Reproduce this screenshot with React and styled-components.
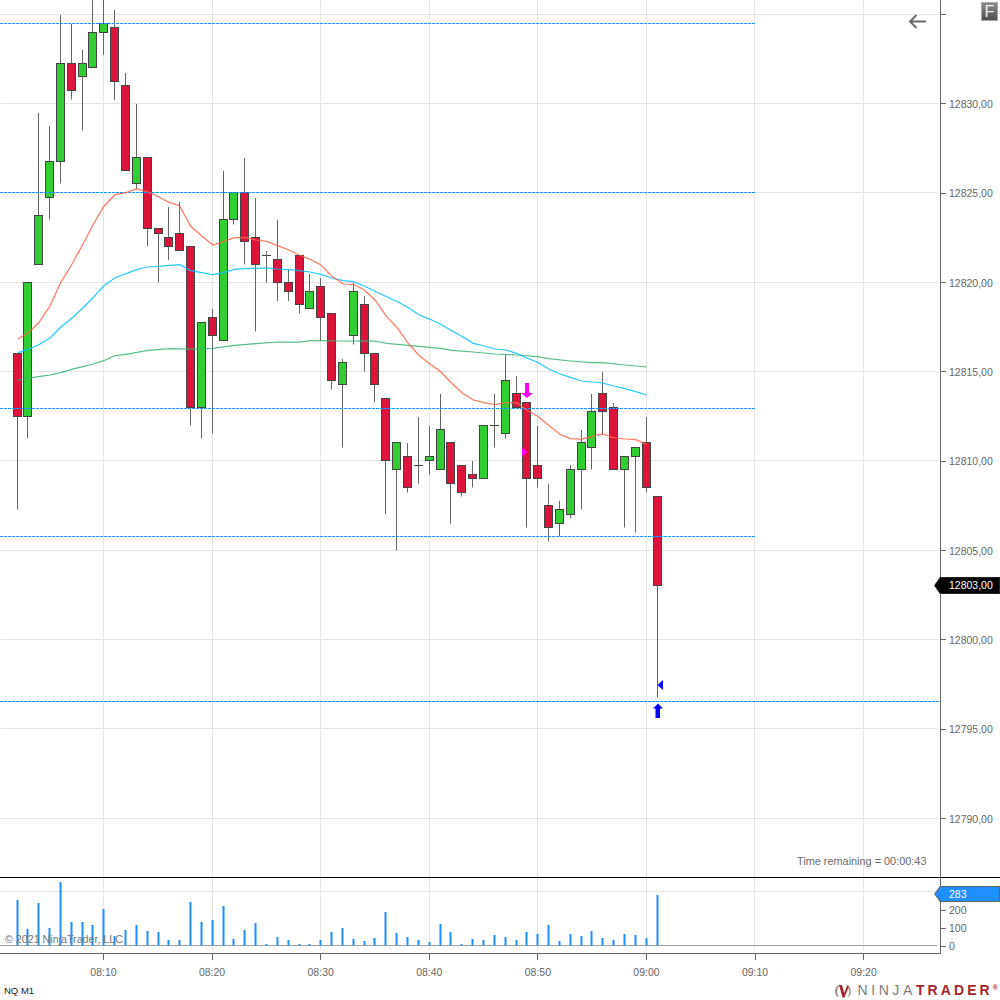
import React from "react";
import styled, { createGlobalStyle } from "styled-components";

const GlobalStyle = createGlobalStyle`
  html, body { margin: 0; padding: 0; background: #fff; }
  body { font-family: "Liberation Sans", Arial, sans-serif; }
`;

const Page = styled.div`
  width: 1000px;
  height: 1000px;
  display: flex;
  flex-direction: column;
  overflow: hidden;
  background: #fff;
`;

const Panel = styled.div`
  display: flex;
  height: ${(p) => p.$height}px;
  flex: none;
  border-bottom: ${(p) => (p.$divider ? "1px solid #000" : "none")};
`;

const Plot = styled.div`
  position: relative;
  width: 940px;
  flex: none;
  svg { display: block; }
`;

const Axis = styled.div`
  position: relative;
  flex: 1;
  display: flex;
  flex-direction: column;
  border-left: 1px solid #666;
  padding-top: ${(p) => p.$top || 0}px;
`;

const PriceColumn = styled.div`
  margin-top: -30.1px;
  overflow: visible;
`;

const AxisLabel = styled.div`
  display: flex;
  flex: none;
  align-items: center;
  height: ${(p) => p.$step}px;
  gap: ${(p) => p.$gap}px;
  font-size: 10.5px;
  color: #666;
  &::before {
    content: "";
    width: 5px;
    height: 1px;
    background: #666;
  }
`;

const Overlay = styled.div`
  position: absolute;
  font-size: ${(p) => p.$size || 10.5}px;
  color: #6b6b6b;
  white-space: nowrap;
`;

const RemainingText = styled(Overlay)`
  left: 797px;
  top: 855px;
`;

const CopyrightText = styled(Overlay)`
  left: 5px;
  top: 55px;
  color: #777;
`;

const BackArrow = styled.svg`
  position: absolute;
  left: 908px;
  top: 14px;
`;

const FlagButton = styled.div`
  position: absolute;
  right: 2px;
  top: 2px;
  width: 17px;
  height: 19px;
  box-sizing: border-box;
  border: 1px solid #a8a8a8;
  background: linear-gradient(#8c8c8c, #4f4f4f);
  color: #eee;
  font-size: 16px;
  line-height: 17px;
  text-align: center;
`;

const PriceTag = styled.div`
  position: absolute;
  left: -7px;
  top: ${(p) => p.$top}px;
  width: 66px;
  height: ${(p) => p.$height}px;
  line-height: ${(p) => p.$height}px;
  box-sizing: border-box;
  padding-left: 15px;
  font-size: 10.5px;
  color: #fff;
  background: ${(p) => p.$edge};
  clip-path: polygon(0 50%, 6px 0, 100% 0, 100% 100%, 6px 100%);
  &::before {
    content: "";
    position: absolute;
    inset: 1px 1px 1px 1px;
    background: ${(p) => p.$fill};
    clip-path: polygon(0 50%, 6px 0, 100% 0, 100% 100%, 6px 100%);
  }
  span { position: relative; }
`;

const TimeRow = styled.div`
  display: flex;
  flex: none;
  box-sizing: border-box;
  width: 941px;
  height: 27px;
  padding-left: 49.2px;
  border-top: 1px solid #666;
`;

const TimeLabel = styled.div`
  width: 108.6px;
  flex: none;
  display: flex;
  flex-direction: column;
  align-items: center;
  gap: 6px;
  font-size: 10.5px;
  line-height: 12px;
  color: #666;
  &::before {
    content: "";
    width: 1px;
    height: 6px;
    background: #666;
  }
`;

const Footer = styled.div`
  display: flex;
  flex: 1;
  align-items: center;
  justify-content: space-between;
  padding: 0 2px 0 4px;
`;

const Instrument = styled.div`
  font-size: 9.5px;
  color: #222;
`;

const Logo = styled.div`
  display: flex;
  align-items: center;
  gap: 4px;
  font-size: 14px;
  line-height: 14px;
`;

const LogoNinja = styled.span`
  color: #7d7d7d;
  letter-spacing: 3.6px;
`;

const LogoTrader = styled.span`
  color: #a3262e;
  font-weight: 700;
  letter-spacing: 3.1px;
`;

const LogoMark = styled.sup`
  font-size: 7px;
  line-height: 7px;
  color: #a3262e;
  font-weight: 700;
  vertical-align: 5px;
`;

// [colour, x, body top, body bottom, high, low]
const candles = [
  ["r", 17.5, 353.5, 416.5, 353.5, 509.5],
  ["g", 27.5, 282.5, 416.5, 282.5, 438.5],
  ["g", 38.5, 215.5, 264.5, 113, 264.5],
  ["g", 49.5, 161.5, 197.5, 126, 219.5],
  ["g", 60.5, 63.5, 161.5, 15, 183.5],
  ["r", 71.5, 63.5, 90.5, 24, 99.5],
  ["g", 82.5, 63.5, 76.5, 50, 130.5],
  ["g", 92.5, 32.5, 67.5, -2, 67.5],
  ["g", 103.5, 23.5, 32.5, -2, 55],
  ["r", 114.5, 27.5, 81.5, 10, 100],
  ["r", 125.5, 85.5, 170.5, 73, 170.5],
  ["g", 136.5, 157.5, 183.5, 104, 189],
  ["r", 147.5, 157.5, 228.5, 157.5, 246.5],
  ["r", 158.5, 228.5, 233.5, 228.5, 282.5],
  ["r", 168.5, 237.5, 246.5, 207, 260],
  ["r", 179.5, 233.5, 250.5, 202, 250.5],
  ["r", 190.5, 246.5, 407.5, 246.5, 425.5],
  ["g", 201.5, 322.5, 407.5, 322.5, 438.5],
  ["r", 212.5, 317.5, 335.5, 309, 433.5],
  ["g", 223.5, 219.5, 340.5, 171, 340.5],
  ["g", 233.5, 192.5, 219.5, 192.5, 224.5],
  ["r", 244.5, 192.5, 241.5, 158, 264.5],
  ["r", 255.5, 237.5, 264.5, 198, 331.5],
  ["d", 266.5, 255.5, 255.5, 251, 282.5],
  ["r", 277.5, 259.5, 282.5, 220, 301],
  ["r", 288.5, 282.5, 291.5, 269, 301],
  ["r", 299.5, 255.5, 304.5, 255.5, 313.5],
  ["g", 309.5, 291.5, 308.5, 274, 308.5],
  ["r", 320.5, 286.5, 317.5, 278, 340.5],
  ["r", 331.5, 313.5, 380.5, 313.5, 389.5],
  ["g", 342.5, 362.5, 384.5, 359, 447.5],
  ["g", 353.5, 291.5, 335.5, 283, 344.5],
  ["r", 364.5, 304.5, 353.5, 296, 371.5],
  ["r", 374.5, 353.5, 384.5, 353.5, 402.5],
  ["r", 385.5, 398.5, 460.5, 398.5, 514.5],
  ["g", 396.5, 442.5, 469.5, 442.5, 550.5],
  ["r", 407.5, 456.5, 487.5, 443, 492.5],
  ["d", 418.5, 465.5, 465.5, 417, 483.5],
  ["g", 429.5, 456.5, 460.5, 426, 474.5],
  ["g", 440.5, 429.5, 469.5, 394, 469.5],
  ["r", 450.5, 442.5, 483.5, 442.5, 523.5],
  ["r", 461.5, 465.5, 492.5, 465.5, 496.5],
  ["r", 472.5, 474.5, 478.5, 461, 487.5],
  ["g", 483.5, 425.5, 478.5, 425.5, 478.5],
  ["d", 494.5, 425.5, 425.5, 394, 447.5],
  ["g", 505.5, 380.5, 433.5, 354, 438.5],
  ["r", 516.5, 393.5, 407.5, 376, 407.5],
  ["r", 526.5, 402.5, 478.5, 402.5, 527.5],
  ["r", 537.5, 465.5, 478.5, 426, 487.5],
  ["r", 548.5, 505.5, 527.5, 484, 541.5],
  ["g", 559.5, 509.5, 523.5, 501, 536.5],
  ["g", 570.5, 469.5, 514.5, 465, 518.5],
  ["g", 581.5, 442.5, 469.5, 430, 509.5],
  ["g", 591.5, 411.5, 447.5, 394, 469.5],
  ["r", 602.5, 393.5, 411.5, 372, 434.5],
  ["r", 613.5, 407.5, 469.5, 403, 469.5],
  ["g", 624.5, 456.5, 469.5, 456.5, 527.5],
  ["g", 635.5, 447.5, 456.5, 447.5, 532.5],
  ["r", 646.5, 442.5, 487.5, 417, 492.5],
  ["r", 657.5, 496.5, 585.5, 496.5, 697.5],
];

const volumeTops = [
  900, 929, 903, 928, 882, 922, 922, 925, 909, 936, 930, 925, 931, 932, 940, 940, 902, 922, 920, 906,
  939, 930, 923, 944, 937, 940, 944, 944, 940, 932, 928, 939, 941, 938, 912, 933, 937, 940, 942, 924,
  932, 944, 939, 940, 935, 937, 940, 932, 934, 925, 941, 934, 936, 931, 938, 940, 934, 935, 938, 895,
];

const fastLine =
  "18,339 28,333 38.5,323 50,306 60.5,283 71.5,265 82.5,245 93,225 103.5,206.7 115,194.7 126,192.7 136.5,189 147.5,191.7 158.5,196.7 169,202.3 179.5,205.7 190.5,226 201.5,235.7 212.7,245 223.3,241.7 234.3,237.7 245,237.7 256,240 266.7,241.3 277.7,245.7 288.7,250 299.3,255 310,259.3 321,265 331.7,276 343.3,284 353.3,284.3 364.3,290 375,300 386.7,316.7 397.7,328.3 408.3,343.3 419.3,355.7 430,364 440.7,371.7 451.7,383.3 462.7,393.3 473.3,400 484,402.7 495,404.7 506,402.7 516.7,402.7 526.7,410 537.3,416 548.3,425 560,434.3 570.7,438.7 581.7,439 591.7,436.7 602.7,434 613.3,437.7 625,439 635.7,439.7 646.7,444.3";
const midLine =
  "18,352.7 28.3,349.3 38.3,345 50,338 60.7,327.3 71.7,318.3 82.7,308.3 93.3,297.3 103.7,286 115,277.7 126,273.7 137.3,269.3 147.7,267 158.3,266.3 170,265.3 180,264.7 190.7,270.7 201.7,272.7 212.7,274.7 223.3,272.7 234.3,269.3 245,268.7 266.7,268 277.7,269 288.7,269.7 299.3,270.7 310,272 321,274.3 331.7,278 343.3,280.7 353.3,281.7 364.3,286 375,291.3 386.7,296.7 397.7,301.7 408.3,307.7 419.3,315 430,319.3 440.7,324.3 451.7,330.7 462.7,336.7 473.3,343.3 484,346 495,349 506,350 516.7,353.3 526.7,358 537.3,362 548.3,368.7 560,374 570.7,377.3 581.7,381 591.7,382 602.7,383 613.3,386 625,388.7 635.7,391.7 646.7,395";
const slowLine =
  "18,380 38.3,376.7 50,375 60.7,372.7 71.7,369.3 82.7,366.7 93.3,364 103.7,360.7 115,355.7 126,354.3 147.7,350.3 170,348.7 190.7,349 212.7,348.3 234.3,345.3 256,343.7 277.7,342 299.3,342 310,340.7 321,340.7 340,341 375,341 386.7,343.3 408.3,345.3 440.7,348.3 451.7,350.3 473.3,352 495,354 516.7,355 537.3,356.7 548.3,358.7 570.7,361 591.7,362.7 602.7,362.7 625,365 646.7,367";

const gridX = [103.5, 212.5, 320.5, 429.5, 537.5, 646.5, 754.5, 863.5];
const gridY = [14.5, 103.5, 192.5, 282.5, 371.5, 460.5, 550.5, 639.5, 728.5, 818.5];
const levels = [
  [23.5, 755],
  [192.5, 755],
  [408.5, 755],
  [536.5, 755],
  [701.5, 939],
];

const prices = ["", "12830,00", "12825,00", "12820,00", "12815,00", "12810,00", "12805,00", "12800,00", "12795,00", "12790,00"];
const times = ["08:10", "08:20", "08:30", "08:40", "08:50", "09:00", "09:10", "09:20"];

const Candle = ({ c }) => {
  const [kind, x, top, bottom, high, low] = c;
  return (
    <g>
      <line x1={x} x2={x} y1={high} y2={low} stroke="#666" />
      {kind === "d" ? (
        <line x1={x - 4.5} x2={x + 4.5} y1={top} y2={top} stroke="#444" />
      ) : (
        <rect
          x={x - 4}
          y={top}
          width={8}
          height={bottom - top}
          fill={kind === "g" ? "#32cd32" : "#dc143c"}
          stroke="#444"
        />
      )}
    </g>
  );
};

const PriceChart = () => (
  <svg width="940" height="877" viewBox="0 0 940 877">
    <g stroke="#e4e4e4" shapeRendering="crispEdges">
      {gridX.map((x) => (
        <line key={x} x1={x} x2={x} y1={0} y2={877} />
      ))}
      {gridY.map((y) => (
        <line key={y} x1={1} x2={938} y1={y} y2={y} />
      ))}
    </g>
    {candles.map((c) => (
      <Candle key={c[1]} c={c} />
    ))}
    <g stroke="#1e90ff" strokeDasharray="3 1" shapeRendering="crispEdges">
      {levels.map(([y, end]) => (
        <line key={y} x1={0} x2={end} y1={y} y2={y} />
      ))}
    </g>
    <g fill="none" strokeOpacity="0.85" strokeWidth="1.25">
      <polyline points={slowLine} stroke="#3cb371" />
      <polyline points={midLine} stroke="#00bfff" />
      <polyline points={fastLine} stroke="#ff6347" />
    </g>
    <path d="M525 383h4v10h4l-6 5-6-5h4z" fill="#f0f" />
    <path d="M522 447l5.5 5-5.5 5z" fill="#f0f" />
    <path d="M663 680v10l-5.5-5z" fill="#00f" />
    <path d="M658 703.5l5 5h-3v9.5h-4.500v-9.500h-2.500z" fill="#00f" />
  </svg>
);

const VolumeChart = () => (
  <svg width="940" height="75" viewBox="0 0 940 75">
    <g stroke="#e4e4e4" shapeRendering="crispEdges">
      {gridX.map((x) => (
        <line key={x} x1={x} x2={x} y1={0} y2={72} />
      ))}
      <line x1={1} x2={938} y1={13.5} y2={13.5} />
    </g>
    <line x1={0} x2={937} y1={67.5} y2={67.5} stroke="#a0a0a0" shapeRendering="crispEdges" />
    {candles.map((c, i) => (
      <rect key={c[1]} x={c[1] - 1} y={volumeTops[i] - 878} width={2} height={945.5 - volumeTops[i]} fill="#1e90ff" />
    ))}
  </svg>
);

const App = () => (
  <Page>
    <GlobalStyle />
    <Panel $height={877} $divider>
      <Plot>
        <PriceChart />
        <RemainingText $size={10.9}>Time remaining = 00:00:43</RemainingText>
        <BackArrow width="19" height="15" viewBox="0 0 19 15">
          <path d="M18 7.500H1.500M8.500 1L2 7.500l6.500 6.500" fill="none" stroke="#6b6b6b" strokeWidth="2" />
        </BackArrow>
      </Plot>
      <Axis>
        <PriceColumn>
          {prices.map((p, i) => (
            <AxisLabel key={i} $step={89.33} $gap={3}>
              {p}
            </AxisLabel>
          ))}
        </PriceColumn>
        <PriceTag $top={577} $height={17} $fill="#000" $edge="#222">
          <span>12803,00</span>
        </PriceTag>
        <FlagButton>F</FlagButton>
      </Axis>
    </Panel>
    <Panel $height={75}>
      <Plot>
        <VolumeChart />
        <CopyrightText $size={10.7}>© 2021 NinjaTrader, LLC</CopyrightText>
      </Plot>
      <Axis $top={23}>
        {["200", "100", "0"].map((v) => (
          <AxisLabel key={v} $step={18} $gap={3}>
            {v}
          </AxisLabel>
        ))}
        <PriceTag $top={8} $height={16} $fill="#1e90ff" $edge="#666">
          <span>283</span>
        </PriceTag>
      </Axis>
    </Panel>
    <TimeRow>
      {times.map((t) => (
        <TimeLabel key={t}>{t}</TimeLabel>
      ))}
    </TimeRow>
    <Footer>
      <Instrument>NQ M1</Instrument>
      <Logo>
        <svg width="20" height="15" viewBox="0 0 20 15">
          <path d="M7 1.500C2 3 .5 8 3 12.500c1 1 2 1.500 3 2C3.500 10 4 5 7 1.500z" fill="#a39a94" />
          <path d="M12 1c4.500 1 7 5 6 9.500-.5 2-2 3.500-3.500 4 2-3.500 2.500-9-2.500-13.500z" fill="#b9aea6" />
          <path d="M6 2h3l2.200 8L14 3h2l-4.500 11.500h-2z" fill="#a3262e" />
        </svg>
        <span>
          <LogoNinja>NINJA</LogoNinja>
          <LogoTrader>TRADER</LogoTrader>
          <LogoMark>®</LogoMark>
        </span>
      </Logo>
    </Footer>
  </Page>
);

export default App;
